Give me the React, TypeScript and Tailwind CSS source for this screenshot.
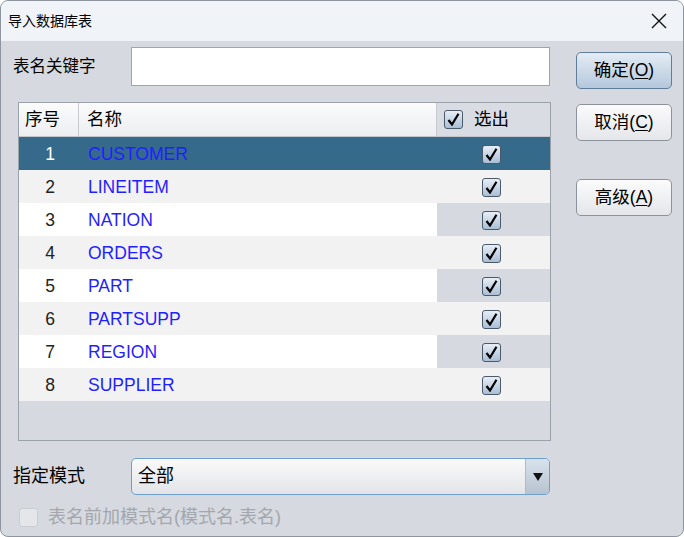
import { useState } from 'react';

type Row = { no: number; name: string; checked: boolean };

const ROWS: Row[] = [
  { no: 1, name: 'CUSTOMER', checked: true },
  { no: 2, name: 'LINEITEM', checked: true },
  { no: 3, name: 'NATION', checked: true },
  { no: 4, name: 'ORDERS', checked: true },
  { no: 5, name: 'PART', checked: true },
  { no: 6, name: 'PARTSUPP', checked: true },
  { no: 7, name: 'REGION', checked: true },
  { no: 8, name: 'SUPPLIER', checked: true },
];

const FONT = "font-['Liberation_Sans','Noto_Sans_CJK_SC',sans-serif]";

function CheckMark({ disabled = false }: { disabled?: boolean }) {
  return (
    <span
      className={
        'inline-flex h-[19px] w-[19px] items-center justify-center rounded-[3px] border ' +
        (disabled
          ? 'border-[#c9ccd2] bg-[#e4e6ea]'
          : 'border-[#4b5a6a] bg-gradient-to-b from-[#e8eef6] to-[#a9bfd6]')
      }
    >
      {!disabled && (
        <svg width="13" height="13" viewBox="0 0 13 13">
          <path d="M1.5 7 L5 11.5 L11.5 0.8" fill="none" stroke="#000" strokeWidth="2.2" />
        </svg>
      )}
    </span>
  );
}

function Button({ label, mnemonic, primary = false }: { label: string; mnemonic: string; primary?: boolean }) {
  return (
    <button
      className={
        'flex h-[37px] w-[96px] items-center justify-center rounded-[5px] border text-[17.5px] text-black ' +
        (primary
          ? 'border-[#5f7d99] bg-gradient-to-b from-[#e4ecf5] to-[#b4c8dc]'
          : 'border-[#8d939b] bg-gradient-to-b from-[#fbfbfc] to-[#e4e6ea]')
      }
    >
      {label}(<span className="underline underline-offset-2">{mnemonic}</span>)
    </button>
  );
}

export default function App() {
  const [rows] = useState(ROWS);
  return (
    <div className={`h-[537px] w-[684px] overflow-hidden rounded-[8px] border border-[#8f959c] bg-[#d6d9df] ${FONT}`}>
      <div className="flex h-[40px] items-center justify-between bg-[#f0f3f8] pl-[7px] pr-[16px]">
        <span className="text-[14px] text-black">导入数据库表</span>
        <svg width="16" height="16" viewBox="0 0 16 16">
          <path d="M1 1 L15 15 M15 1 L1 15" stroke="#111" strokeWidth="1.4" />
        </svg>
      </div>

      <div className="flex">
        <div className="flex w-[552px] flex-col pl-[12px]">
          <div className="mt-[6px] flex items-center">
            <span className="w-[118px] text-[16.5px] text-black">表名关键字</span>
            <div className="h-[39px] w-[419px] border border-[#9ea4ab] bg-white" />
          </div>

          <div className="ml-[5px] mt-[16px] flex h-[339px] w-[533px] flex-col border border-[#9ba1a8] bg-[#d6d9df]">
            <div className="flex h-[34px] border-b border-[#c2c6cc] bg-gradient-to-b from-[#fbfbfb] to-[#eceef1] text-[17.5px] text-black">
              <div className="flex w-[60px] items-center border-r border-[#c6cad0] pl-[6px]">序号</div>
              <div className="flex w-[358px] items-center border-r border-[#c6cad0] pl-[8px]">名称</div>
              <div className="flex flex-1 items-center gap-[11px] bg-[#d9dde3] pl-[7px]">
                <CheckMark />
                <span>选出</span>
              </div>
            </div>
            {rows.map((r, i) => {
              const sel = i === 0;
              const even = i % 2 === 1;
              const base = sel ? 'bg-[#366a8b]' : even ? 'bg-[#f2f2f2]' : 'bg-white';
              const chk = sel ? 'bg-[#366a8b]' : even ? 'bg-[#f2f2f2]' : 'bg-[#d6d9df]';
              return (
                <div key={r.no} className="flex h-[33px]">
                  <div className={`flex w-[60px] items-center justify-end pr-[24px] pt-[2px] text-[17.5px] ${base} ${sel ? 'text-white' : 'text-[#222]'}`}>
                    {r.no}
                  </div>
                  <div className={`flex w-[358px] items-center pl-[9px] pt-[2px] text-[17.5px] text-[#1f1fff] ${base}`}>{r.name}</div>
                  <div className={`flex flex-1 items-center justify-center pr-[4px] pt-[2px] ${chk}`}>
                    <CheckMark />
                  </div>
                </div>
              );
            })}
          </div>

          <div className="mt-[17px] flex items-center">
            <span className="w-[118px] text-[18px] text-black">指定模式</span>
            <div className="flex h-[37px] w-[419px] overflow-hidden rounded-[5px] border border-[#6d9fcf] bg-gradient-to-b from-[#fafafa] to-[#e2e4e8]">
              <span className="flex flex-1 items-center pl-[6px] text-[18px] text-black">全部</span>
              <span className="flex w-[24px] items-center justify-center border-l border-[#b4bac2] bg-gradient-to-b from-[#d9e2ec] to-[#b7c3d1]">
                <svg width="10" height="8" viewBox="0 0 10 8">
                  <path d="M0 0 H10 L5 8 Z" fill="#111" />
                </svg>
              </span>
            </div>
          </div>

          <div className="mt-[9px] flex items-center gap-[10px] pl-[6px]">
            <CheckMark disabled />
            <span className="text-[18px] text-[#a3a7ad]">表名前加模式名(模式名.表名)</span>
          </div>
        </div>

        <div className="flex flex-col pl-[23px] pt-[11px]">
          <Button label="确定" mnemonic="O" primary />
          <div className="mt-[15px]">
            <Button label="取消" mnemonic="C" />
          </div>
          <div className="mt-[38px]">
            <Button label="高级" mnemonic="A" />
          </div>
        </div>
      </div>
    </div>
  );
}
